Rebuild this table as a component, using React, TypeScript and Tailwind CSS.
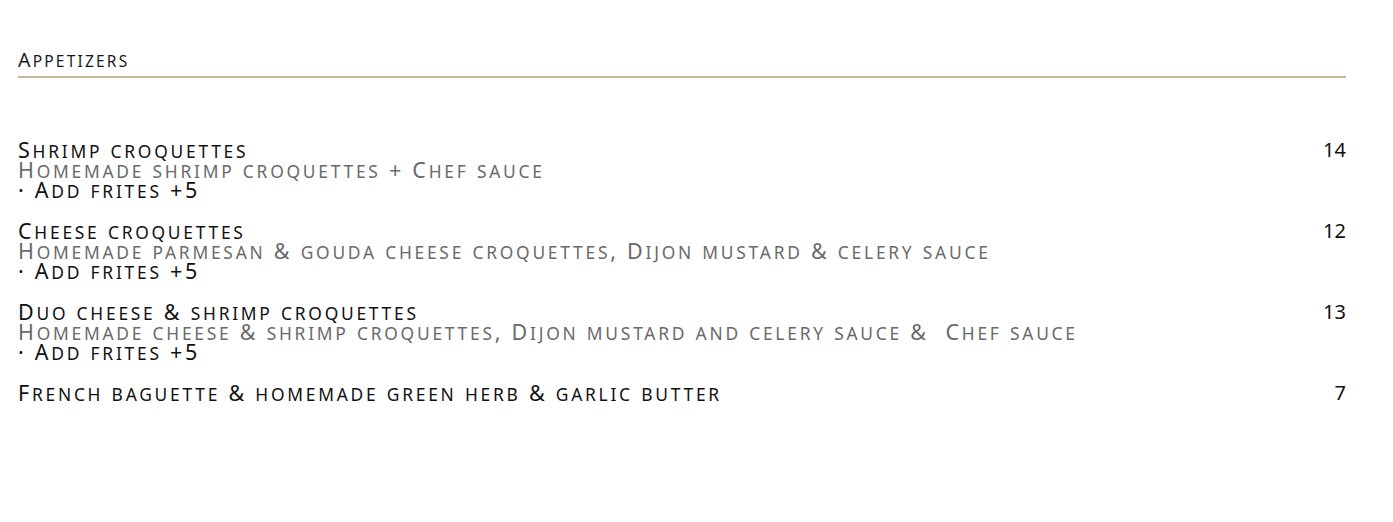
import React from "react";

type SCProps = { text: string; small: string; className?: string };

function SmallCaps({ text, small, className }: SCProps) {
  const runs: { s: string; low: boolean }[] = [];
  for (const ch of text) {
    const low = ch !== ch.toUpperCase() && ch === ch.toLowerCase();
    const last = runs[runs.length - 1];
    if (last && last.low === low) last.s += ch;
    else runs.push({ s: ch, low });
  }
  return (
    <span className={className}>
      {runs.map((r, i) =>
        r.low ? (
          <span key={i} className={`uppercase ${small}`}>
            {r.s}
          </span>
        ) : (
          <span key={i}>{r.s}</span>
        )
      )}
    </span>
  );
}

const items = [
  {
    title: "Shrimp croquettes",
    desc: "Homemade shrimp croquettes + Chef sauce",
    price: "14",
    extra: true,
  },
  {
    title: "Cheese croquettes",
    desc: "Homemade parmesan & gouda cheese croquettes, Dijon mustard & celery sauce",
    price: "12",
    extra: true,
  },
  {
    title: "Duo cheese & shrimp croquettes",
    desc: "Homemade cheese & shrimp croquettes, Dijon mustard and celery sauce &\u00a0 Chef sauce",
    price: "13",
    extra: true,
  },
  {
    title: "French baguette & homemade green herb & garlic butter",
    desc: "",
    price: "7",
    extra: false,
  },
];

export default function App() {
  return (
    <div
      className="w-[1393px] h-[522px] bg-white pl-[18px] pr-[47px] pt-[50px] text-[#111]"
      style={{ fontFamily: "'Noto Sans', sans-serif" }}
    >
      <div className="border-b-2 border-[#c8b89b] pb-[6px]">
        <div className="h-[20px] text-[19.5px] leading-[20px] tracking-[2.2px] text-[#1a1a1a] whitespace-nowrap">
          <SmallCaps text="Appetizers" small="text-[15.5px]" />
        </div>
      </div>
      <div className="mt-[62px] flex flex-col gap-[21px]">
        {items.map((it) => (
          <div key={it.title} className="flex justify-between text-[21.5px] leading-[20px] tracking-[2.75px]">
            <div className="flex flex-col">
              <div className="h-[20px] whitespace-nowrap text-[#111]">
                <SmallCaps text={it.title} small="text-[17.4px]" />
              </div>
              {it.desc && (
                <div className="h-[20px] whitespace-nowrap text-[#6a6a6a]">
                  <SmallCaps text={it.desc} small="text-[17.4px]" />
                </div>
              )}
              {it.extra && (
                <div className="h-[20px] whitespace-nowrap text-[#111]">
                  <SmallCaps text="· Add frites +5" small="text-[17.4px]" />
                </div>
              )}
            </div>
            <div className="h-[20px] text-[#111] text-[20px] tracking-normal">{it.price}</div>
          </div>
        ))}
      </div>
    </div>
  );
}
